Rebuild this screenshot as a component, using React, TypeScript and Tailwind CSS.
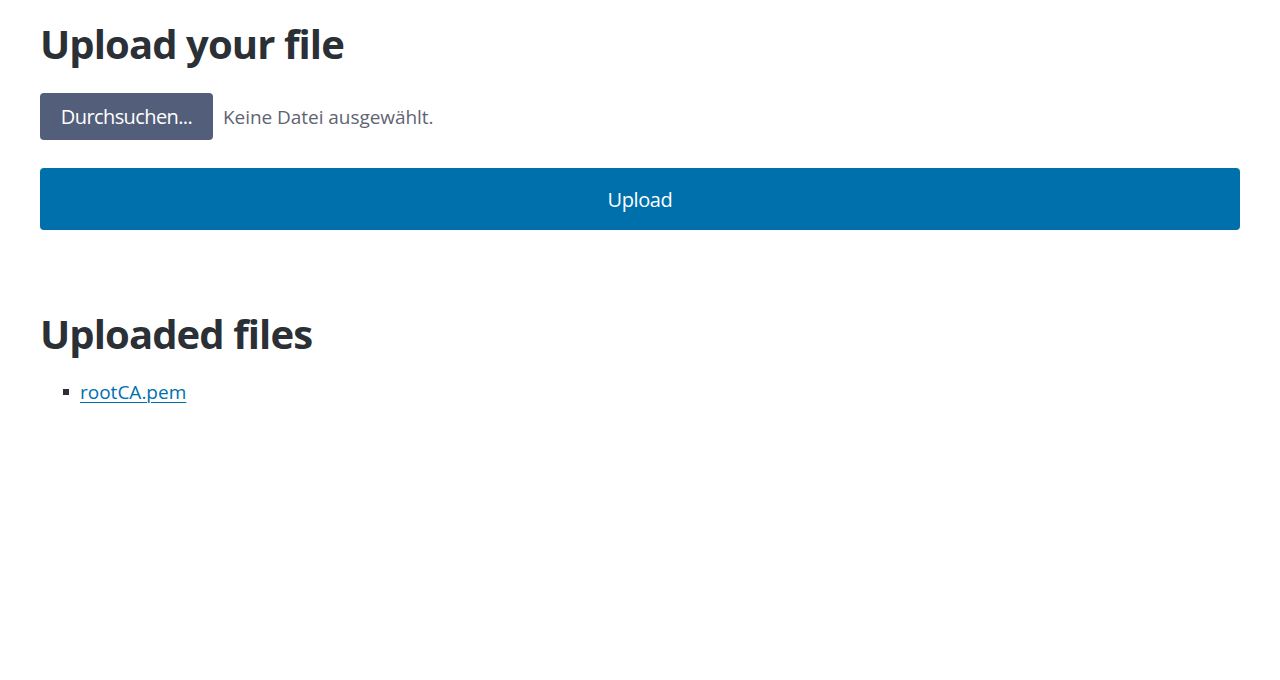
import React from "react";

const files = ["rootCA.pem"];

export default function App() {
  return (
    <div
      className="min-h-screen bg-white px-10 text-[20px] text-[#2b2f36]"
      style={{ fontFamily: '"Open Sans", "Noto Sans", sans-serif' }}
    >
      <h1 className="pt-[16px] text-[40px] font-bold leading-[56px] tracking-[-0.9px]">
        Upload your file
      </h1>
      <div className="mt-[21px] flex items-center gap-[10px]">
        <button className="flex h-[47px] w-[173px] items-center justify-center rounded-[4px] bg-[#525e7a] text-[20px] tracking-[-0.6px] text-white">
          Durchsuchen...
        </button>
        <span className="pt-[2px] text-[19px] tracking-[-0.05px] text-[#5f6473]">Keine Datei ausgewählt.</span>
      </div>
      <button className="mt-[28px] flex h-[62px] w-full items-center justify-center rounded-[4px] bg-[#0070ad] pt-[2px] text-[20px] tracking-[-0.4px] text-white">
        Upload
      </button>

      <h2 className="mt-[76px] text-[40px] font-bold leading-[56px] tracking-[-0.9px]">
        Uploaded files
      </h2>
      <ul className="mt-[16px] pl-[23px]">
        {files.map((f) => (
          <li key={f} className="flex items-center gap-[11px] leading-[28px]">
            <span className="h-[6px] w-[6px] bg-[#2b2f36]" />
            <a href="#" className="text-[19px] tracking-[0px] text-[#0070ad] underline underline-offset-[3px] decoration-[1px]">
              {f}
            </a>
          </li>
        ))}
      </ul>
    </div>
  );
}
